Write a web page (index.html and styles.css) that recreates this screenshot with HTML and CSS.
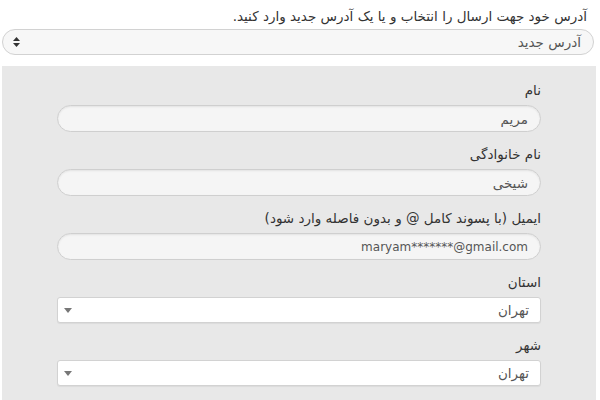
FILE: index.html
```html
<!DOCTYPE html>
<html lang="fa" dir="rtl">
<head>
  <meta charset="UTF-8">
  <meta name="viewport" content="width=device-width, initial-scale=1.0">
  <title>آدرس ارسال</title>
  <link rel="stylesheet" href="styles.css">
</head>
<body>
  <div class="page">
    <p class="intro">آدرس خود جهت ارسال را انتخاب و یا یک آدرس جدید وارد کنید.</p>

    <div class="select pill">
      <span class="value">آدرس جدید</span>
      <svg width="7" height="10" viewBox="0 0 7 10">
        <path d="M3.5 0 L7 4 H0 Z M0 6 H7 L3.5 10 Z" fill="#333"/>
      </svg>
    </div>

    <form class="panel">
      <div class="field">
        <label for="firstName">نام</label>
        <input type="text" id="firstName" value="مریم">
      </div>

      <div class="field">
        <label for="lastName">نام خانوادگی</label>
        <input type="text" id="lastName" value="شیخی">
      </div>

      <div class="field">
        <label for="email">ایمیل (با پسوند کامل @ و بدون فاصله وارد شود)</label>
        <input type="text" id="email" value="maryam*******@gmail.com">
      </div>

      <div class="field">
        <label>استان</label>
        <div class="select">
          <span class="value">تهران</span>
          <svg width="8" height="5" viewBox="0 0 8 5">
            <path d="M0 0 H8 L4 5 Z" fill="#777"/>
          </svg>
        </div>
      </div>

      <div class="field">
        <label>شهر</label>
        <div class="select">
          <span class="value">تهران</span>
          <svg width="8" height="5" viewBox="0 0 8 5">
            <path d="M0 0 H8 L4 5 Z" fill="#777"/>
          </svg>
        </div>
      </div>
    </form>
  </div>
</body>
</html>
```

FILE: styles.css
```css
body {
  margin: 0;
  font-family: "DejaVu Sans", Tahoma, sans-serif;
  font-size: 13.5px;
  color: #333;
  background: #fff;
}
.page {
  padding: 0 6px 0 2px;
}
.intro {
  margin: 0;
  padding: 7px 7px 0 0;
  height: 22px;
  line-height: 18px;
}
.select {
  display: flex;
  align-items: center;
  justify-content: space-between;
  box-sizing: border-box;
  height: 26px;
  padding: 0 11px 0 6px;
  color: #555;
  background: #fff;
  border: 1px solid #d2d2d2;
  border-radius: 3px;
  box-shadow: 0 1px 1px rgba(0, 0, 0, 0.06);
}
.select.pill {
  margin: 0 0 11px 0;
  padding: 0 12px 0 10px;
  border-radius: 13px;
  background: #f7f7f7;
  box-shadow: none;
}
.panel {
  margin: 0 -2px 0 0;
  padding: 15px 55px 10px;
  background: #e8e8e8;
}
.field {
  margin-bottom: 13px;
}
label {
  display: block;
  height: 18px;
  line-height: 18px;
  margin-bottom: 6px;
}
input {
  display: block;
  box-sizing: border-box;
  width: 100%;
  height: 27px;
  padding: 0 12px;
  font: inherit;
  color: #555;
  background: #f5f5f5;
  border: 1px solid #cfcfcf;
  border-radius: 14px;
  box-shadow: inset 0 1px 2px rgba(0, 0, 0, 0.08);
}
#email {
  direction: ltr;
  text-align: right;
  font-size: 12px;
}
```
